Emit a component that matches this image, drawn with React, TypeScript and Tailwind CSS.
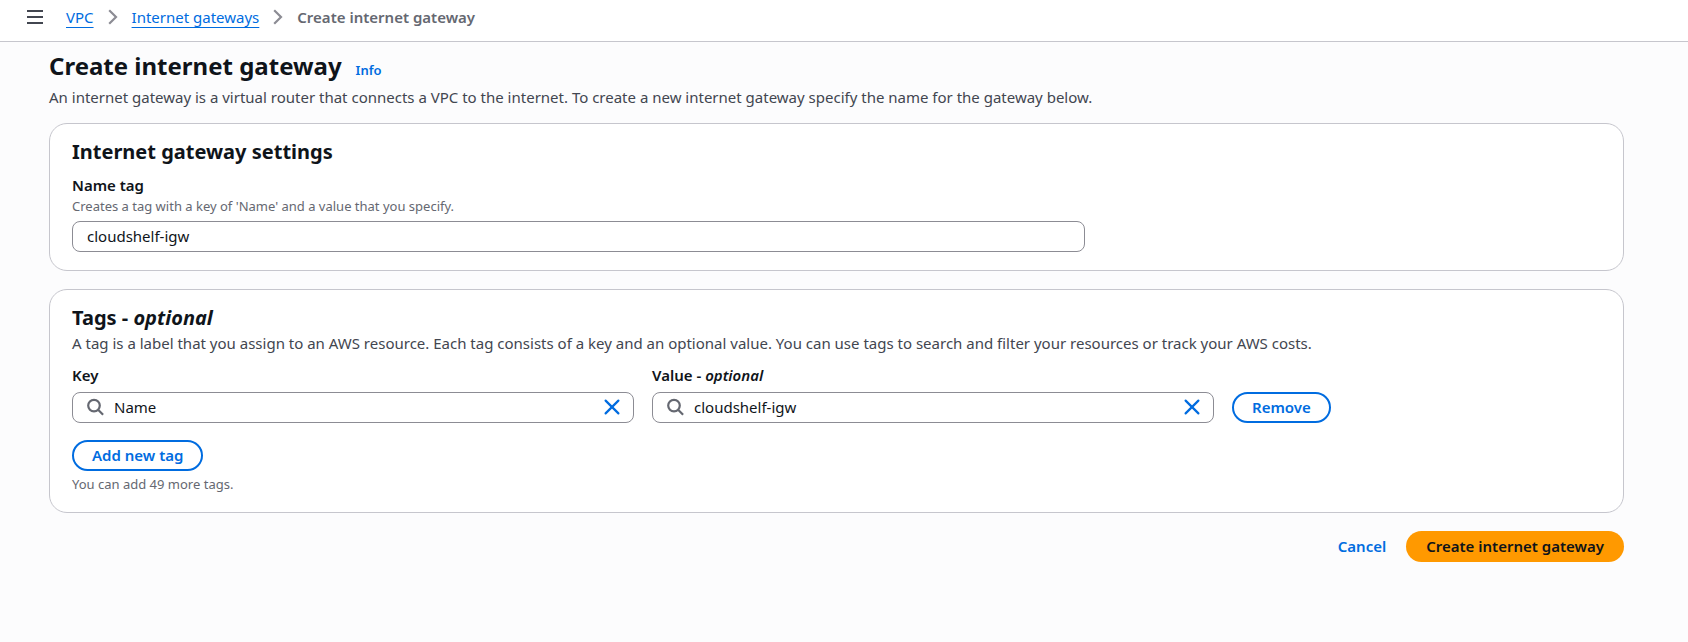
import { useState } from "react";
import type { ReactNode } from "react";

function MenuIcon() {
  return (
    <svg width="16" height="16" viewBox="0 0 16 16" fill="none" stroke="#424650" strokeWidth="2" aria-hidden="true">
      <path d="M0 2h16M0 8h16M0 14h16" />
    </svg>
  );
}

function ChevronIcon() {
  return (
    <svg width="10" height="16" viewBox="0 0 10 16" fill="none" stroke="#8c8c94" strokeWidth="2.2" aria-hidden="true">
      <path d="M1.2 1.2 8 8l-6.8 6.8" />
    </svg>
  );
}

function SearchIcon() {
  return (
    <svg width="18" height="18" viewBox="0 0 18 18" fill="none" stroke="#656871" strokeWidth="2.2" aria-hidden="true">
      <circle cx="8" cy="7.6" r="5.8" />
      <path d="m12.1 11.8 5 5" />
    </svg>
  );
}

function CloseIcon() {
  return (
    <svg width="16" height="16" viewBox="0 0 16 16" fill="none" stroke="#006ce0" strokeWidth="2.2" strokeLinecap="round" aria-hidden="true">
      <path d="m1.6 1.6 12.8 12.8M14.4 1.6 1.6 14.4" />
    </svg>
  );
}

function Card({ children }: { children: ReactNode }) {
  return <section className="rounded-[18px] border border-[#c6c6cd] bg-white px-[22px] pt-3.5 pb-[18px]">{children}</section>;
}

function SearchField({ id, label, initial }: { id: string; label: ReactNode; initial: string }) {
  const [value, setValue] = useState(initial);
  return (
    <div className="min-w-0 max-w-[562px] flex-1">
      <label htmlFor={id} className="block font-semibold">
        {label}
      </label>
      <div className="mt-1.5 flex h-[31px] items-center rounded-lg border border-[#8c8c94] bg-white px-[13px] pb-0.5">
        <SearchIcon />
        <input
          id={id}
          value={value}
          onChange={(e) => setValue(e.target.value)}
          className="ml-2.5 min-w-0 flex-1 bg-transparent outline-none"
        />
        <button type="button" aria-label="Clear" onClick={() => setValue("")}>
          <CloseIcon />
        </button>
      </div>
    </div>
  );
}

const outlineButton =
  "h-[31px] rounded-full border-2 border-[#006ce0] bg-white px-[18px] pb-0.5 font-semibold text-[#006ce0] whitespace-nowrap";

export default function App() {
  const [name, setName] = useState("cloudshelf-igw");
  return (
    <div className="min-h-screen bg-[#fcfcfd] font-['Noto_Sans',sans-serif] text-[15px] leading-[22px] text-[#0f141a]">
      <header className="flex h-[42px] items-center gap-[23px] border-b border-[#c6c6cd] bg-white pb-[7px] pl-[27px]">
        <button type="button" aria-label="Open navigation">
          <MenuIcon />
        </button>
        <nav aria-label="Breadcrumbs">
          <ol className="flex items-center gap-3.5">
            <li>
              <a href="#vpc" className="text-[#006ce0] underline underline-offset-4">VPC</a>
            </li>
            <li aria-hidden="true"><ChevronIcon /></li>
            <li>
              <a href="#gateways" className="text-[#006ce0] underline underline-offset-4">Internet gateways</a>
            </li>
            <li aria-hidden="true"><ChevronIcon /></li>
            <li className="font-semibold text-[#656871]" aria-current="page">Create internet gateway</li>
          </ol>
        </nav>
      </header>

      <main className="pt-[7px] pr-16 pl-[49px]">
        <div className="flex items-baseline gap-3.5">
          <h1 className="text-2xl leading-[34px] font-bold">Create internet gateway</h1>
          <a href="#info" className="text-[13px] font-semibold text-[#006ce0]">Info</a>
        </div>
        <p className="mt-[3px] text-[#424650]">
          An internet gateway is a virtual router that connects a VPC to the internet. To create a new internet gateway
          specify the name for the gateway below.
        </p>

        <form className="mt-[15px] flex flex-col gap-[18px]" onSubmit={(e) => e.preventDefault()}>
          <Card>
            <h2 className="text-xl leading-7 font-bold">Internet gateway settings</h2>
            <label htmlFor="name-tag" className="mt-2 block font-semibold">Name tag</label>
            <p id="name-hint" className="text-[13px] leading-5 text-[#656871]">
              Creates a tag with a key of 'Name' and a value that you specify.
            </p>
            <input
              id="name-tag"
              aria-describedby="name-hint"
              value={name}
              onChange={(e) => setName(e.target.value)}
              className="mt-[5px] block h-[31px] w-full max-w-[1013px] rounded-lg border border-[#8c8c94] bg-white px-3.5 pb-0.5 outline-none"
            />
          </Card>

          <Card>
            <h2 className="text-xl leading-7 font-bold">
              Tags - <i>optional</i>
            </h2>
            <p className="text-[#424650]">
              A tag is a label that you assign to an AWS resource. Each tag consists of a key and an optional value. You
              can use tags to search and filter your resources or track your AWS costs.
            </p>
            <div className="mt-2.5 flex items-end gap-[18px]">
              <SearchField id="tag-key" label="Key" initial="Name" />
              <SearchField id="tag-value" label={<>Value - <i>optional</i></>} initial="cloudshelf-igw" />
              <button type="button" className={outlineButton}>Remove</button>
            </div>
            <button type="button" className={`mt-[17px] block ${outlineButton}`}>Add new tag</button>
            <p className="mt-[3px] text-[13px] leading-5 text-[#656871]">You can add 49 more tags.</p>
          </Card>

          <div className="flex items-center justify-end gap-5">
            <a href="#cancel" className="pb-0.5 font-semibold text-[#006ce0]">Cancel</a>
            <button type="submit" className="h-[31px] rounded-full bg-[#ff9900] px-5 pb-0.5 font-semibold">
              Create internet gateway
            </button>
          </div>
        </form>
      </main>
    </div>
  );
}
